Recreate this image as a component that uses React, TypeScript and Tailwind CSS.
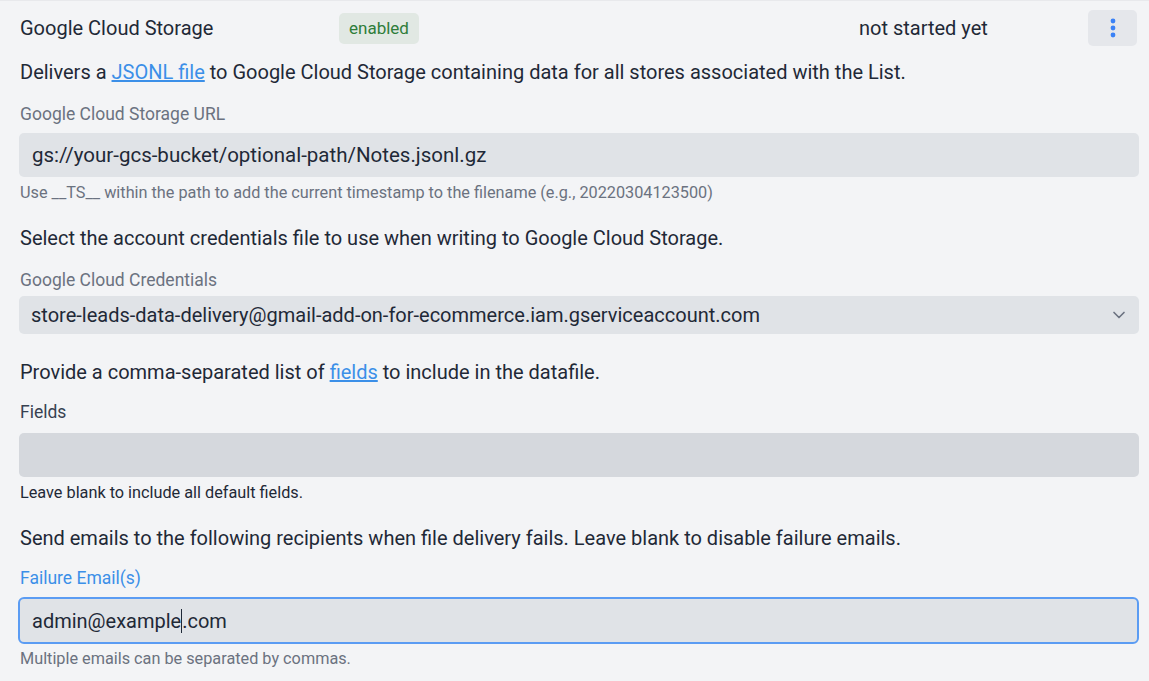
import { ChevronDown } from "lucide-react";

const font = { fontFamily: "Roboto, 'Noto Sans', sans-serif" };

export default function App() {
  return (
    <div className="min-h-[681px] w-[1149px] bg-[#f3f4f6] border-t border-[#e8e9ec] text-[#1f2937]" style={font}>
      <div className="flex items-center h-[53px] pl-[20px] pr-[12px] pt-[1px]">
        <div className="w-[319px] text-[20px]">Google Cloud Storage</div>
        <div className="w-[520px]">
          <span className="inline-block rounded-[5px] bg-[#e1e8e3] text-[#2e7d3a] text-[17px] px-[10px] py-[4px] leading-[23px]">enabled</span>
        </div>
        <div className="flex-1 text-[20px]">not started yet</div>
        <button className="w-[49px] h-[36px] rounded-[5px] bg-[#e5e7eb] flex items-center justify-center">
          <svg width="6" height="20" viewBox="0 0 6 20">
            <circle cx="3" cy="3" r="2.4" fill="#3b82f6" />
            <circle cx="3" cy="10" r="2.4" fill="#3b82f6" />
            <circle cx="3" cy="17" r="2.4" fill="#3b82f6" />
          </svg>
        </button>
      </div>

      <div className="pl-[20px] pr-[10px]">
        <p className="text-[20px] mt-[4px] leading-[28px]">
          Delivers a <a className="text-[#3b8fe8] underline">JSONL file</a> to Google Cloud Storage containing data for all stores associated with the List.
        </p>

        <div className="mt-[17px] text-[17.5px] text-[#6b7280] leading-[22px]">Google Cloud Storage URL</div>
        <div className="-ml-[1px] mt-[8px] h-[44px] rounded-[5px] bg-[#e0e3e7] flex items-center px-[13px] text-[20.5px]">
          gs://your-gcs-bucket/optional-path/Notes.jsonl.gz
        </div>
        <div className="mt-[6px] text-[16.25px] text-[#6b7280] leading-[20px]">
          Use __TS__ within the path to add the current timestamp to the filename (e.g., 20220304123500)
        </div>

        <p className="mt-[21px] text-[20px] leading-[28px]">
          Select the account credentials file to use when writing to Google Cloud Storage.
        </p>
        <div className="mt-[17px] text-[17.5px] text-[#6b7280] leading-[22px]">Google Cloud Credentials</div>
        <div className="-ml-[1px] mt-[5px] h-[38px] rounded-[5px] bg-[#e0e3e7] flex items-center justify-between pl-[12px] pr-[10px] text-[20px]">
          <span>store-leads-data-delivery@gmail-add-on-for-ecommerce.iam.gserviceaccount.com</span>
          <ChevronDown size={20} strokeWidth={2} className="text-[#6b7280]" />
        </div>

        <p className="mt-[24px] text-[20px] leading-[28px]">
          Provide a comma-separated list of <a className="text-[#3b8fe8] underline">fields</a> to include in the datafile.
        </p>
        <div className="mt-[15px] text-[17.5px] text-[#374151] leading-[22px]">Fields</div>
        <div className="-ml-[1px] mt-[10px] h-[44px] rounded-[5px] bg-[#d5d8dd]"></div>
        <div className="mt-[6px] text-[16.25px] text-[#1f2937] leading-[20px]">Leave blank to include all default fields.</div>

        <p className="mt-[21px] text-[20px] leading-[28px]">
          Send emails to the following recipients when file delivery fails. Leave blank to disable failure emails.
        </p>
        <div className="mt-[15px] text-[17.5px] text-[#3b8fe8] leading-[22px]">Failure Email(s)</div>
        <div className="-ml-[2px] mt-[8px] h-[47px] rounded-[6px] bg-[#e0e3e7] border-2 border-[#5b9cf3] flex items-center px-[12px] text-[20px]">
          <span>admin@example</span>
          <span className="inline-block w-[1px] h-[24px] bg-[#1f2937]"></span>
          <span>.com</span>
        </div>
        <div className="mt-[5px] text-[16.25px] text-[#6b7280] leading-[20px]">Multiple emails can be separated by commas.</div>
      </div>
    </div>
  );
}
